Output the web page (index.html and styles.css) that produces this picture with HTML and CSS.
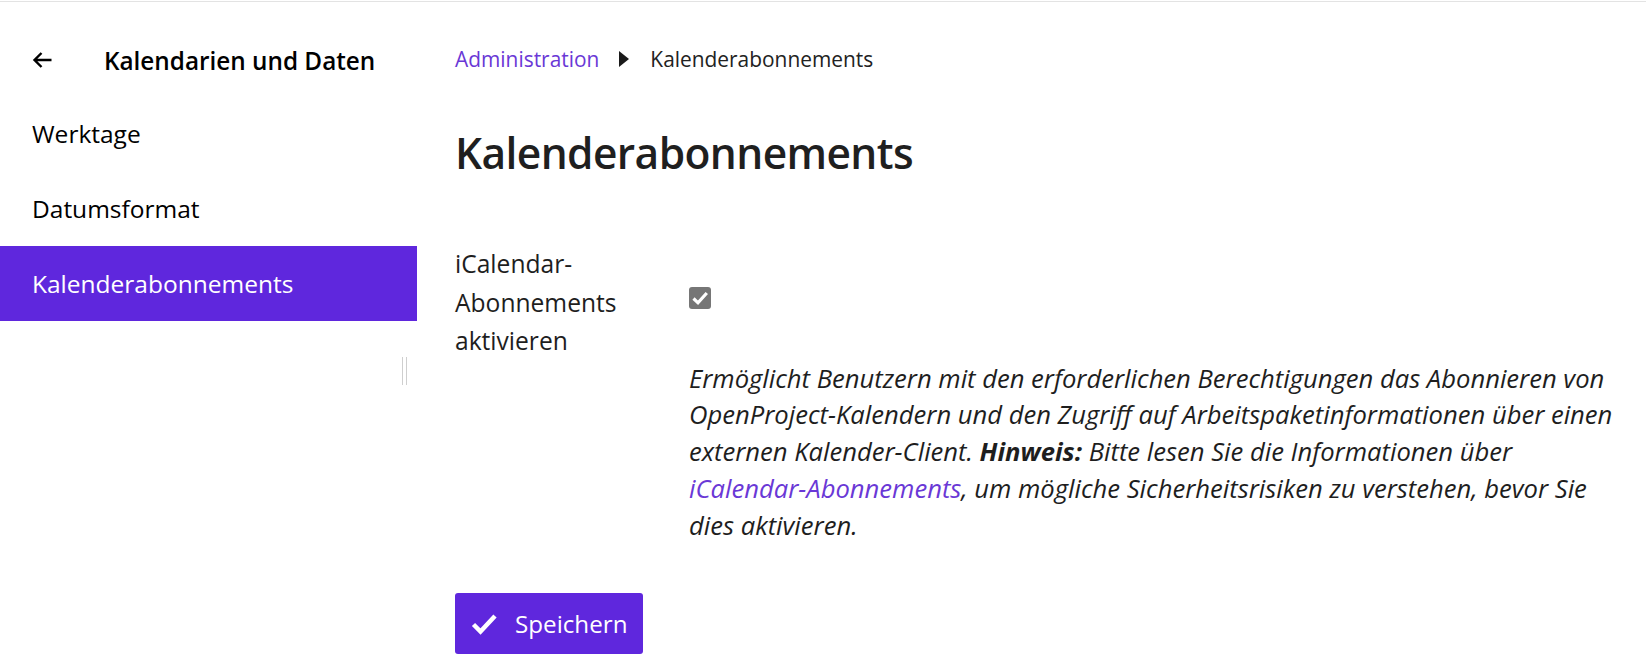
FILE: index.html
```html
<!DOCTYPE html>
<html lang="de">
<head>
<meta charset="utf-8">
<title>Kalenderabonnements</title>
<link rel="stylesheet" href="styles.css">
</head>
<body>
<div class="topline"></div>
<div class="layout">
  <aside class="sidebar">
    <div class="sidebar-header">
      <svg class="back-arrow" width="20" height="18" viewBox="0 0 20 18"><path d="M9.5 2 L2.5 9 L9.5 16 M2.5 9 H19.5" fill="none" stroke="#000" stroke-width="2.4"/></svg>
      <span class="sidebar-title">Kalendarien und Daten</span>
    </div>
    <nav class="menu">
      <a class="menu-item">Werktage</a>
      <a class="menu-item">Datumsformat</a>
      <a class="menu-item active">Kalenderabonnements</a>
    </nav>
    <div class="resizer"></div>
  </aside>
  <main class="content">
    <div class="breadcrumb">
      <a class="crumb-link">Administration</a>
      <span class="crumb-sep"></span>
      <span>Kalenderabonnements</span>
    </div>
    <h1 class="title">Kalenderabonnements</h1>
    <div class="form-row">
      <label class="form-label">iCalendar-Abonnements aktivieren</label>
      <div class="form-field">
        <span class="checkbox"><svg width="18" height="16" viewBox="0 0 18 16"><path d="M2.5 8.5 L7 12.8 L15.8 3" fill="none" stroke="#fff" stroke-width="3.2"/></svg></span>
      </div>
    </div>
    <div class="form-row">
      <div class="form-label-spacer"></div>
      <p class="instructions">Ermöglicht Benutzern mit den erforderlichen Berechtigungen das Abonnieren von OpenProject-Kalendern und den Zugriff auf Arbeitspaketinformationen über einen externen Kalender-Client. <strong>Hinweis:</strong> Bitte lesen Sie die Informationen über <a class="inline-link">iCalendar-Abonnements</a>, um mögliche Sicherheitsrisiken zu verstehen, bevor Sie dies aktivieren.</p>
    </div>
    <button class="btn-primary">
      <svg width="26" height="22" viewBox="0 0 26 22"><path d="M2.5 11.5 L9.5 18.5 L24 3" fill="none" stroke="#fff" stroke-width="4.5"/></svg>
      <span>Speichern</span>
    </button>
  </main>
</div>
</body>
</html>
```

FILE: styles.css
```css
html, body {
  margin: 0;
  padding: 0;
  background: #fff;
}
body {
  font-family: "Open Sans", "Noto Sans", sans-serif;
  color: #1e1e1e;
}
.topline {
  margin-top: 1px;
  height: 1px;
  background: #e3e3e3;
}
.layout {
  display: flex;
}
.sidebar {
  position: relative;
  width: 417px;
  flex: none;
  padding-top: 28px;
  height: 668px;
  box-sizing: border-box;
}
.sidebar-header {
  display: flex;
  align-items: center;
  height: 60px;
  padding-left: 32px;
  margin-bottom: 6px;
}
.back-arrow {
  flex: none;
}
.sidebar-title {
  margin-left: 52px;
  font-weight: 600;
  font-size: 24.3px;
  color: #000;
}
.menu {
  display: flex;
  flex-direction: column;
}
.menu-item {
  display: flex;
  align-items: center;
  height: 75px;
  padding-left: 32px;
  font-size: 24.5px;
  color: #000;
}
.menu-item.active {
  background: #5f27dd;
  color: #fff;
}
.resizer {
  position: absolute;
  left: 402px;
  top: 355px;
  width: 3px;
  height: 28px;
  border-left: 1px solid #cfcfcf;
  border-right: 1px solid #cfcfcf;
}
.content {
  flex: 1;
  padding: 40px 16px 0 38px;
}
.breadcrumb {
  display: flex;
  align-items: center;
  height: 34px;
  font-size: 20.9px;
  color: #222;
}
.crumb-link {
  color: #6a38d6;
}
.crumb-sep {
  width: 0;
  height: 0;
  border-top: 8.5px solid transparent;
  border-bottom: 8.5px solid transparent;
  border-left: 10px solid #1a1a1a;
  margin: 0 21px 0 20px;
}
.title {
  margin: 49px 0 0;
  font-size: 42.5px;
  font-weight: 600;
  letter-spacing: -0.6px;
  line-height: 56px;
  color: #1f1f1f;
}
.form-row {
  display: flex;
}
.form-label,
.form-label-spacer {
  width: 234px;
  flex: none;
  box-sizing: border-box;
}
.form-label {
  margin-top: 64px;
  padding-right: 24px;
  font-size: 24.6px;
  line-height: 38.5px;
}
.form-field {
  margin-top: 106px;
}
.checkbox {
  display: flex;
  align-items: center;
  justify-content: center;
  width: 22px;
  height: 22px;
  border-radius: 3px;
  background: #767676;
}
.instructions {
  margin: 0;
  font-size: 25.6px;
  line-height: 36.75px;
  font-style: italic;
  color: #1e1e1e;
}
.instructions strong {
  font-weight: 700;
}
.inline-link {
  color: #6a38d6;
  white-space: nowrap;
}
.btn-primary {
  display: flex;
  align-items: center;
  gap: 18px;
  margin-top: 49px;
  height: 61px;
  padding: 0 16px;
  border: 0;
  border-radius: 3px;
  background: #5f27dd;
  color: #fff;
  font-family: inherit;
  font-size: 24.2px;
}
```
